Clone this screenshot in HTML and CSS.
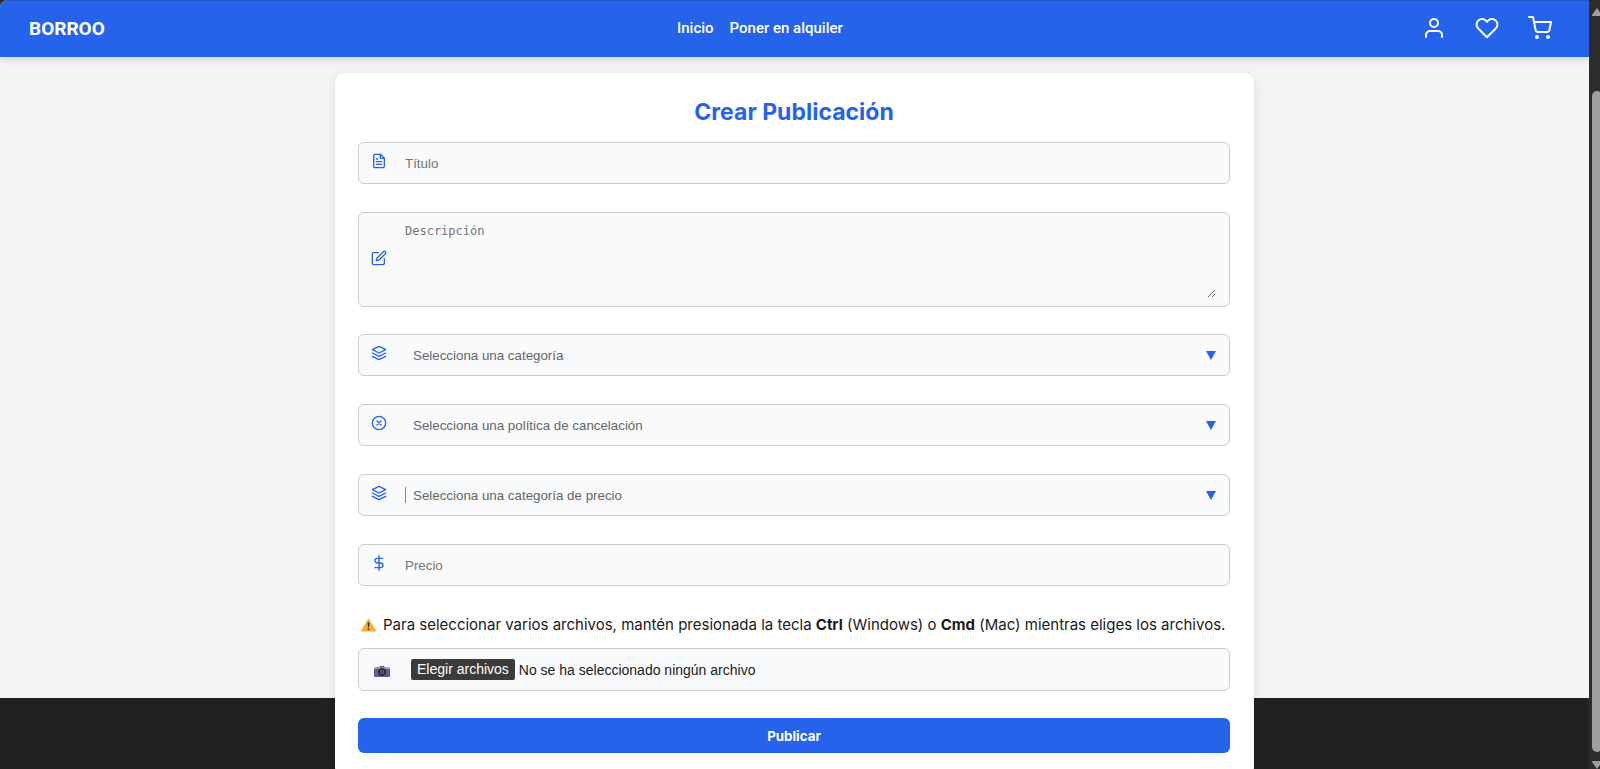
FILE: index.html
```html
<!DOCTYPE html>
<html lang="es">
<head>
<meta charset="utf-8">
<title>Borroo - Crear Publicación</title>
<link rel="stylesheet" href="styles.css">
</head>
<body>
<div class="window">
  <div class="page">
    <header class="navbar">
      <a class="brand" href="#">BORROO</a>
      <nav class="links">
        <a href="#">Inicio</a>
        <a href="#">Poner en alquiler</a>
      </nav>
      <div class="actions">
        <a href="#" aria-label="Perfil"><svg class="nav-icon" viewBox="0 0 24 24"><path d="M20 21v-2a4 4 0 0 0-4-4H8a4 4 0 0 0-4 4v2"/><circle cx="12" cy="7" r="4"/></svg></a>
        <a href="#" aria-label="Favoritos"><svg class="nav-icon" viewBox="0 0 24 24"><path d="M20.84 4.61a5.5 5.5 0 0 0-7.78 0L12 5.67l-1.06-1.06a5.5 5.5 0 0 0-7.78 7.78l1.06 1.06L12 21.23l7.78-7.78 1.06-1.06a5.5 5.5 0 0 0 0-7.78z"/></svg></a>
        <a href="#" aria-label="Carrito"><svg class="nav-icon" viewBox="0 0 24 24"><circle cx="9" cy="21" r="1"/><circle cx="20" cy="21" r="1"/><path d="M1 1h4l2.68 13.39a2 2 0 0 0 2 1.61h9.72a2 2 0 0 0 2-1.61L23 6H6"/></svg></a>
      </div>
    </header>
    <main class="content">
      <form class="card">
        <h1 class="title">Crear Publicación</h1>
        <div class="field">
          <svg class="icon" viewBox="0 0 24 24"><path d="M14 2H6a2 2 0 0 0-2 2v16a2 2 0 0 0 2 2h12a2 2 0 0 0 2-2V8z"/><path d="M14 2v6h6M16 13H8M16 17H8M10 9H8"/></svg>
          <input class="control" type="text" placeholder="Título" aria-label="Título">
        </div>
        <div class="field field-area">
          <svg class="icon" viewBox="0 0 24 24"><path d="M11 4H4a2 2 0 0 0-2 2v14a2 2 0 0 0 2 2h14a2 2 0 0 0 2-2v-7"/><path d="M18.5 2.5a2.12 2.12 0 0 1 3 3L12 15l-4 1 1-4z"/></svg>
          <textarea class="control area" placeholder="Descripción" aria-label="Descripción"></textarea>
        </div>
        <div class="field">
          <svg class="icon" viewBox="0 0 24 24"><path d="M12 2 2 7l10 5 10-5z"/><path d="m2 17 10 5 10-5M2 12l10 5 10-5"/></svg>
          <select class="control select" aria-label="Categoría"><option>Selecciona una categoría</option></select>
          <svg class="arrow" viewBox="0 0 10 9"><path d="M0 0h10L5 9z"/></svg>
        </div>
        <div class="field">
          <svg class="icon" viewBox="0 0 24 24"><circle cx="12" cy="12" r="10"/><path d="m15 9-6 6M9 9l6 6"/></svg>
          <select class="control select" aria-label="Política de cancelación"><option>Selecciona una política de cancelación</option></select>
          <svg class="arrow" viewBox="0 0 10 9"><path d="M0 0h10L5 9z"/></svg>
        </div>
        <div class="field">
          <svg class="icon" viewBox="0 0 24 24"><path d="M12 2 2 7l10 5 10-5z"/><path d="m2 17 10 5 10-5M2 12l10 5 10-5"/></svg>
          <span class="caret"></span>
          <select class="control select" aria-label="Categoría de precio"><option>Selecciona una categoría de precio</option></select>
          <svg class="arrow" viewBox="0 0 10 9"><path d="M0 0h10L5 9z"/></svg>
        </div>
        <div class="field">
          <svg class="icon" viewBox="0 0 24 24"><path d="M12 1v22M17 5H9.5a3.5 3.5 0 0 0 0 7h5a3.5 3.5 0 0 1 0 7H6"/></svg>
          <input class="control" type="text" inputmode="decimal" placeholder="Precio" aria-label="Precio">
        </div>
        <p class="note">
          <svg class="warning" viewBox="0 0 16 14"><path d="M8 0 .3 12.3Q-.4 14 1 14h14q1.400 0 .7-1.700z" fill="#fbab2e"/><path d="M7.100 4h1.800l-.3 5.500H7.400z" fill="#333"/><circle cx="8" cy="11.500" r="1" fill="#333"/></svg>
          <span>Para seleccionar varios archivos, mantén presionada la tecla <strong>Ctrl</strong> (Windows) o <strong>Cmd</strong> (Mac) mientras eliges los archivos.</span>
        </p>
        <div class="field file-field">
          <svg class="camera" viewBox="0 0 16 11"><path d="M2 1h3v1H2zM5 1.500 6 0h4l1 1.500z" fill="#55536a"/><rect y="1.500" width="16" height="9.500" rx="1" fill="#6c5a96"/><path d="M0 2.500q0-1 1-1h14q1 0 1 1V3H0z" fill="#a9a6b8"/><circle cx="8" cy="6" r="4" fill="#2c2b38"/><circle cx="8" cy="6" r="2" fill="#6d7f96"/><circle cx="8" cy="6" r="1" fill="#18181f"/></svg>
          <input class="file-input" type="file" id="archivos" multiple>
          <label class="file-button" for="archivos">Elegir archivos</label>
          <span class="file-name">No se ha seleccionado ningún archivo</span>
        </div>
        <button class="submit" type="submit">Publicar</button>
      </form>
    </main>
    <footer class="footer"></footer>
  </div>
  <div class="scrollbar" aria-hidden="true">
    <svg class="scroll-arrow" viewBox="0 0 10 8"><path d="M5 0 10 7q0 1-1 1H1Q0 8 0 7z"/></svg>
    <div class="thumb"></div>
    <svg class="scroll-arrow" viewBox="0 0 10 8"><path d="M5 8 10 1q0-1-1-1H1Q0 0 0 1z"/></svg>
  </div>
</div>
</body>
</html>
```
FILE: styles.css
```css
* {
  box-sizing: border-box;
}

body {
  margin: 0;
  background: #2c2c2c;
  color: #1a1a1a;
  font-family: Inter, "Liberation Sans", sans-serif;
  font-size: 15px;
}

.window {
  display: flex;
  height: 100vh;
  overflow: hidden;
}

.page {
  flex: 1;
  min-width: 0;
  display: flex;
  flex-direction: column;
  background: #f3f4f6;
  border-top-left-radius: 8px;
  overflow: hidden;
}

.navbar {
  display: flex;
  justify-content: space-between;
  align-items: center;
  flex: none;
  height: 57px;
  padding: 0 37px 2px 29px;
  background: #2563eb;
  border-top: 1px solid #2458c8;
  box-shadow: 0 2px 8px rgba(0, 0, 0, 0.15);
  font-family: Roboto, sans-serif;
}

.navbar a {
  color: #fff;
  text-decoration: none;
}

.brand {
  font-size: 19px;
  font-weight: 700;
}

.links {
  display: flex;
  gap: 16px;
  font-weight: 500;
}

.actions {
  display: flex;
  gap: 29px;
  padding-left: 7px;
}

.actions a {
  display: flex;
}

.nav-icon {
  width: 24px;
  height: 24px;
  fill: none;
  stroke: #fff;
  stroke-width: 2;
  stroke-linecap: round;
  stroke-linejoin: round;
}

.content {
  flex: 1;
  min-height: 0;
  display: flex;
  justify-content: center;
  align-items: flex-start;
  padding-top: 16px;
}

.card {
  position: relative;
  width: 100%;
  max-width: 919px;
  padding: 24px 24px 24px 23px;
  background: #fff;
  border-radius: 10px;
  box-shadow: 0 4px 12px rgba(0, 0, 0, 0.1);
}

.title {
  margin: 0 0 14px;
  color: #2563eb;
  font-size: 23px;
  line-height: 31px;
  font-weight: 700;
  text-align: center;
}

.field {
  display: flex;
  align-items: center;
  height: 42px;
  margin-bottom: 28px;
  padding: 0 13px 0 12px;
  background: #f9fafb;
  border: 1px solid #ccc;
  border-radius: 6px;
}

.icon {
  flex: none;
  width: 16px;
  height: 16px;
  margin: 0 18px 4px 0;
  fill: none;
  stroke: #2563eb;
  stroke-width: 2;
  stroke-linecap: round;
  stroke-linejoin: round;
}

.control {
  flex: 1;
  min-width: 0;
  padding: 0;
  border: 0;
  outline: 0;
  background: transparent;
  color: #666;
  font-family: "Liberation Sans", Arial, sans-serif;
}

.control::placeholder {
  color: #757575;
}

.field-area {
  height: 95px;
  margin-bottom: 27px;
  padding-top: 8px;
  padding-bottom: 8px;
}

.area {
  height: 100%;
  padding-top: 3px;
  font-family: "DejaVu Sans Mono", monospace;
  font-size: 12px;
  resize: both;
}

.select {
  appearance: none;
  padding-left: 8px;
}

.caret {
  width: 1px;
  height: 16px;
  margin-right: -1px;
  background: #888;
}

.arrow {
  width: 10px;
  height: 9px;
  fill: #2563eb;
}

.note {
  display: flex;
  align-items: center;
  gap: 7px;
  margin: 0 0 13px;
  padding-left: 3px;
  line-height: 21px;
  white-space: nowrap;
}

.warning {
  flex: none;
  width: 15px;
  height: 14px;
}

.file-field {
  height: 43px;
  margin-bottom: 27px;
  padding-left: 15px;
  font-family: "Liberation Sans", Arial, sans-serif;
  font-size: 14px;
}

.camera {
  flex: none;
  width: 16px;
  height: 11px;
  margin: 4px 21px 0 0;
}

.file-input {
  position: absolute;
  width: 1px;
  height: 1px;
  opacity: 0;
}

.file-button {
  padding: 0 6px;
  background: #3b3b3b;
  border-radius: 2px;
  color: #fff;
  line-height: 21px;
}

.file-name {
  margin-left: 4px;
}

.submit {
  display: block;
  width: 100%;
  height: 35px;
  border: 0;
  border-radius: 6px;
  background: #2563eb;
  color: #fff;
  font-family: Inter, sans-serif;
  font-weight: 700;
}

.footer {
  flex: none;
  height: 71px;
  background: #222;
}

.scrollbar {
  display: flex;
  flex-direction: column;
  align-items: flex-start;
  width: 11px;
  padding: 8px 0 0 3px;
  overflow: hidden;
  background: #2c2c2c;
}

.scroll-arrow {
  flex: none;
  width: 10px;
  height: 8px;
  fill: #9f9f9f;
}

.thumb {
  flex: 1;
  width: 10px;
  margin: 75px 0 9px;
  border-radius: 5px;
  background: #9f9f9f;
}
```
